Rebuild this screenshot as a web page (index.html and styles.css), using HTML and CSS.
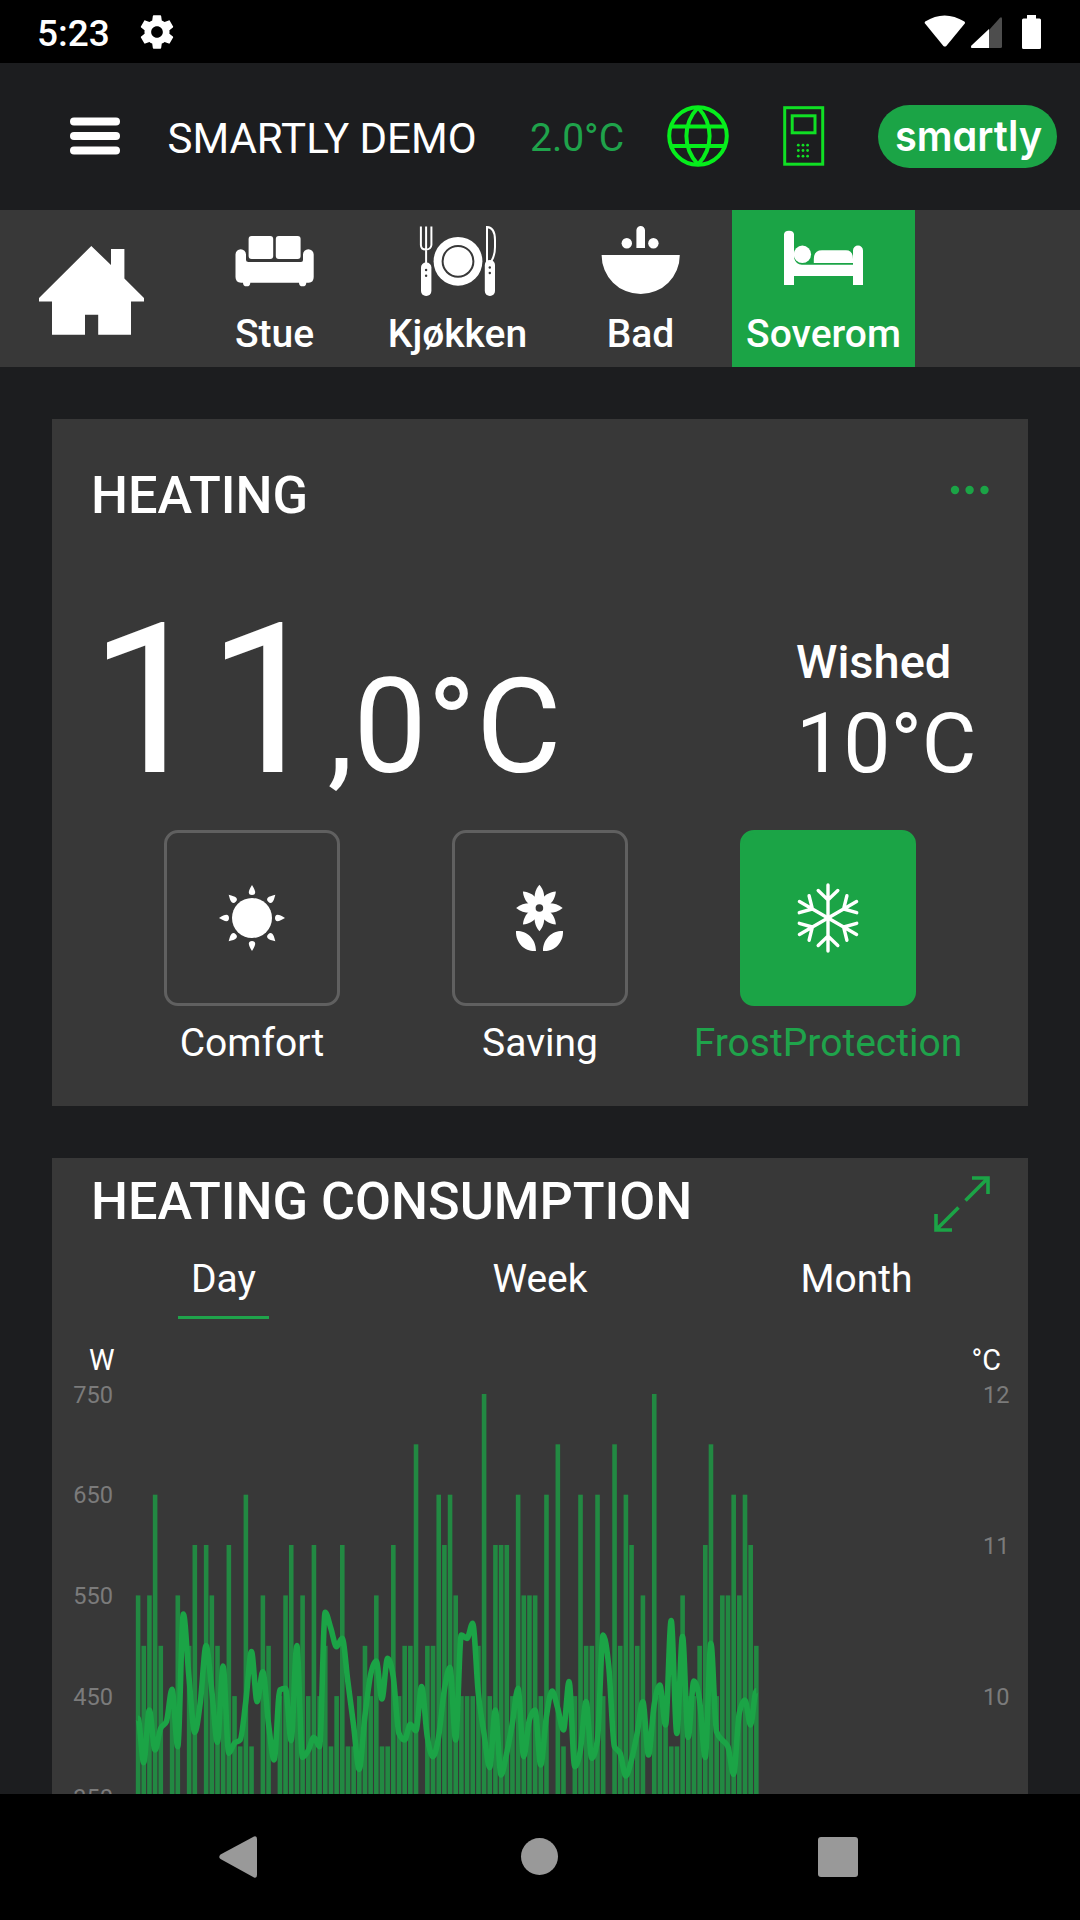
FILE: index.html
```html
<!DOCTYPE html>
<html lang="en">
<head>
<meta charset="utf-8">
<title>Smartly Demo</title>
<link rel="stylesheet" href="styles.css">
</head>
<body>
<div class="screen">
  <div class="status">
    <span class="clock">5:23</span>
    <svg class="gear" viewBox="0 0 24 24"><path d="M19.43 12.98c.04-.32.07-.64.07-.98s-.03-.66-.07-.98l2.11-1.65c.19-.15.24-.42.12-.64l-2-3.46c-.12-.22-.39-.3-.61-.22l-2.49 1c-.52-.4-1.08-.73-1.69-.98l-.38-2.65C14.46 2.18 14.25 2 14 2h-4c-.25 0-.46.18-.49.42l-.38 2.65c-.61.25-1.17.59-1.69.98l-2.49-1c-.23-.09-.49 0-.61.22l-2 3.46c-.13.22-.07.49.12.64l2.11 1.65c-.04.32-.07.65-.07.98s.03.66.07.98l-2.11 1.65c-.19.15-.24.42-.12.64l2 3.46c.12.22.39.3.61.22l2.49-1c.52.4 1.08.73 1.69.98l.38 2.65c.03.24.24.42.49.42h4c.25 0 .46-.18.49-.42l.38-2.65c.61-.25 1.17-.59 1.69-.98l2.49 1c.23.09.49 0 .61-.22l2-3.46c.12-.22.07-.49-.12-.64l-2.11-1.65zM12 15.5c-1.93 0-3.5-1.57-3.5-3.5s1.57-3.5 3.5-3.5 3.5 1.57 3.5 3.5-1.57 3.5-3.5 3.5z"/></svg>
    <svg class="signals" viewBox="924 14 118 34">
      <path d="M925.2 20.6Q944.5 8.5 964.4 20.6Q965.4 21.6 964.8 22.6L946.3 45Q944.8 46.2 943.4 45L925 22.6Q924.3 21.6 925.2 20.6Z"/>
      <path class="dim" d="M989 29L1000 16.8Q1002 15.5 1002 18V45.5Q1002 47 1000.5 47H989Z"/>
      <path d="M989 28V47H972Q970 46.5 971.5 44.5Z"/>
      <path d="M1027 14h9v3.6h3.5q1.5 0 1.5 1.5v27.400q0 1.500-1.500 1.500h-16q-1.500 0-1.500-1.500v-27.400q0-1.500 1.500-1.500h3.500z"/>
    </svg>
  </div>

  <header class="header">
    <svg class="burger" viewBox="0 0 50 38"><rect y="0.500" width="50" height="8" rx="4"/><rect y="15" width="50" height="8" rx="4"/><rect y="29.500" width="50" height="8" rx="4"/></svg>
    <h1 class="title">SMARTLY DEMO</h1>
    <span class="outdoor">2.0°C</span>
    <svg class="globe" viewBox="0 0 62 62"><circle cx="31" cy="31" r="28.800"/><path d="M4 21.500H58M4 41H58M31 2.500C15.500 19 15.500 43 31 59.500M31 2.500C46.500 19 46.500 43 31 59.500"/></svg>
    <svg class="panel" viewBox="0 0 42 60"><rect x="1.700" y="1.700" width="38" height="56.500"/><rect x="9.200" y="9.800" width="22.800" height="17"/><g class="keys"><circle cx="15.300" cy="39.200" r="1.400"/><circle cx="20" cy="39.200" r="1.400"/><circle cx="24.600" cy="39.200" r="1.400"/><circle cx="15.300" cy="44.500" r="1.400"/><circle cx="20" cy="44.500" r="1.400"/><circle cx="24.600" cy="44.500" r="1.400"/><circle cx="15.300" cy="50.200" r="1.400"/><circle cx="20" cy="50.200" r="1.400"/><circle cx="24.600" cy="50.200" r="1.400"/></g></svg>
    <svg class="logo" viewBox="0 0 180 63"><rect width="179" height="63" rx="31.500"/><text x="17" y="45.600" textLength="147" lengthAdjust="spacingAndGlyphs">smartly</text></svg>
  </header>

  <nav class="rooms">
    <a class="room"><svg class="home" viewBox="0 210 183 157"><path d="M39 298L91.300 246L111 265V249H124.400V278.400L144 298V301.400H131V334.700H98.200V314.700H85V334.700H52V301.400H39Z"/></svg></a>
    <a class="room">
      <svg viewBox="230 220 90 90"><rect x="248.600" y="236" width="24.600" height="23" rx="3"/><rect x="275.800" y="236" width="24.800" height="23" rx="3"/><path d="M235.500 254.500a5.200 5.200 0 0 1 10.500 0V260q0 2 2.500 2H301q2 0 2-2v-5.500a5.300 5.300 0 0 1 10.700 0V277q0 5.700-5 5.700H306.300a3.600 3.600 0 0 1-7.300 0H250.300a3.600 3.600 0 0 1-7.300 0H241q-5.500 0-5.500-5.700Z"/></svg>
      <span>Stue</span>
    </a>
    <a class="room">
      <svg viewBox="413 220 90 90">
        <path class="line" d="M420.900 226.500V245q0 4.500 5 4.500t5.500-4.500V226.500M426.100 226.500V265"/>
        <rect x="421" y="262.500" width="10.400" height="33.500" rx="5"/>
        <circle cx="458" cy="261.300" r="24.400"/><circle class="hole-line" cx="458" cy="261.300" r="15.400"/>
        <path class="line" d="M487 262V227Q495 227.500 495 240V247Q495 255 491.500 261"/>
        <rect x="484.800" y="260" width="10.200" height="36" rx="5"/>
        <g class="hole"><circle cx="426.100" cy="270" r="1.200"/><circle cx="426.100" cy="275.700" r="1.200"/><circle cx="489.800" cy="267.500" r="1.200"/><circle cx="489.800" cy="273" r="1.200"/></g>
      </svg>
      <span>Kjøkken</span>
    </a>
    <a class="room">
      <svg viewBox="596 220 90 90"><path d="M601.600 255H679.800A39.100 39.100 0 0 1 601.600 255ZM636.400 248V230.300a4.300 4.300 0 0 1 8.600 0V248Z"/><circle cx="626.800" cy="243.300" r="5.200"/><circle cx="653.400" cy="243.300" r="5.200"/></svg>
      <span>Bad</span>
    </a>
    <a class="room active">
      <svg viewBox="779 220 90 90"><path d="M784 285V234.500q0-3.800 5-3.800t5 3.800V258q2 6.700 8 6.700H853V250.500a5 5 0 0 1 10 0V285H853V276H794V285ZM813.800 263V259q0-8.700 8.200-8.700H846q7 0 7 8.700v4Z"/><circle cx="802.400" cy="254.300" r="8.700"/></svg>
      <span>Soverom</span>
    </a>
  </nav>

  <main class="content">
    <section class="card heating">
      <div class="card-head">
        <h2>HEATING</h2>
        <svg class="more" viewBox="0 0 40 10"><circle cx="5" cy="5" r="4.200"/><circle cx="19.600" cy="5" r="4.200"/><circle cx="34.500" cy="5" r="4.200"/></svg>
      </div>
      <div class="reading">
        <div class="current"><span class="whole">11</span><span class="fraction">,0°C</span></div>
        <div class="wished"><span class="wished-label">Wished</span><span class="wished-value">10°C</span></div>
      </div>
      <div class="modes">
        <div class="mode">
          <div class="tile"><svg viewBox="-35 -35 70 70"><defs><path id="ray" d="M0-33C2-29.500 3.200-27.500 3.200-25.500Q3-23 0-23T-3.200-25.500C-3.200-27.500-2-29.500 0-33Z"/></defs><circle r="20"/><use href="#ray"/><use href="#ray" transform="rotate(45)"/><use href="#ray" transform="rotate(90)"/><use href="#ray" transform="rotate(135)"/><use href="#ray" transform="rotate(180)"/><use href="#ray" transform="rotate(225)"/><use href="#ray" transform="rotate(270)"/><use href="#ray" transform="rotate(315)"/></svg></div>
          <span>Comfort</span>
        </div>
        <div class="mode">
          <div class="tile"><svg viewBox="-35 -35 70 70"><defs><path id="petal" d="M0-23.300C4-18.500 5-14 4.800-9L0 0L-4.800-9C-5-14-4-18.500 0-23.300Z"/></defs><g transform="translate(-.6 -10)"><use href="#petal"/><use href="#petal" transform="rotate(45)"/><use href="#petal" transform="rotate(90)"/><use href="#petal" transform="rotate(135)"/><use href="#petal" transform="rotate(180)"/><use href="#petal" transform="rotate(225)"/><use href="#petal" transform="rotate(270)"/><use href="#petal" transform="rotate(315)"/><circle r="9"/><circle class="hole" r="3.800"/></g><path d="M-24 13C-14 12.500-4 20-4 33C-14 34-24.500 26-24 13ZM23 13C13 12.500 3 20 3 33C13 34 23.500 26 23 13Z"/></svg></div>
          <span>Saving</span>
        </div>
        <div class="mode selected">
          <div class="tile"><svg class="flake" viewBox="-35 -35 70 70"><defs><path id="arm" d="M0 0V-33M-9.800-27.500L0-18L9.800-27.500"/></defs><use href="#arm"/><use href="#arm" transform="rotate(60)"/><use href="#arm" transform="rotate(120)"/><use href="#arm" transform="rotate(180)"/><use href="#arm" transform="rotate(240)"/><use href="#arm" transform="rotate(300)"/></svg></div>
          <span>FrostProtection</span>
        </div>
      </div>
    </section>

    <section class="card consumption">
      <div class="card-head">
        <h2>HEATING CONSUMPTION</h2>
        <svg class="expand" viewBox="0 0 56 56"><path d="M31.500 24.500L54 2M38 2H54V18M24.500 31.500L2 54M2 38V54H18"/></svg>
      </div>
      <div class="periods">
        <a class="period current-period">Day</a>
        <a class="period">Week</a>
        <a class="period">Month</a>
      </div>
      <div class="units"><span>W</span><span>°C</span></div>
      <svg class="chart" viewBox="0 0 976 414">
        <g class="ticks left">
          <text x="61" y="23">750</text><text x="61" y="123">650</text><text x="61" y="223.700">550</text><text x="61" y="324.500">450</text><text x="61" y="426">350</text>
        </g>
        <g class="ticks right">
          <text x="957.500" y="23">12</text><text x="957.500" y="174">11</text><text x="957.500" y="325">10</text>
        </g>
        <g class="bars"></g>
        <path class="trend"/>
      </svg>
    </section>
  </main>

  <div class="navbar">
    <svg viewBox="0 0 1080 126"><path d="M220.500 60.500L254 42.500Q257 41.500 257 45V81Q257 84.500 254 83.500L220.500 65Q218 63 220.500 60.500Z"/><circle cx="539.500" cy="62.500" r="18.500"/><rect x="818" y="43" width="40" height="40" rx="3"/></svg>
  </div>
</div>
<script src="chart.js"></script>
</body>
</html>
```
FILE: styles.css
```css
* { box-sizing: border-box; margin: 0; padding: 0; }
body { background: #000; color: #fff; font-family: Roboto, "Liberation Sans", sans-serif; }
svg { display: block; fill: #fff; flex: none; }
.screen { width: 1080px; height: 1920px; display: flex; flex-direction: column; overflow: hidden; background: #1c1d1f; }

.status { height: 63px; flex: none; background: #000; display: flex; align-items: center; padding: 0 38px 0 37px; }
.clock { width: 100px; font-size: 37px; font-weight: 500; line-height: 40px; padding-top: 4px; }
.gear { width: 40px; height: 40px; }
.signals { width: 118px; height: 34px; margin-left: auto; }
.dim { fill: #4d4d4d; }

.header { height: 147px; flex: none; display: grid; grid-template-columns: 98px 362.500px 137px 116px 95px 180px; align-items: center; padding: 0 0 1px 69.500px; }
.burger { width: 50px; height: 38px; }
.title { font-size: 42px; font-weight: 400; line-height: 50px; padding-top: 5px; white-space: nowrap; }
.outdoor { font-size: 39px; line-height: 50px; padding-top: 4px; color: #1fa34b; }
.globe { width: 62px; height: 62px; fill: none; stroke: #06ee1c; stroke-width: 4; }
.panel { width: 42px; height: 60px; fill: none; stroke: #10e024; stroke-width: 3; }
.keys { fill: #10e024; stroke: none; }
.logo { width: 180px; height: 63px; fill: #1ba446; }
.logo text { fill: #fff; font-family: Inter, sans-serif; font-size: 42.500px; font-weight: 600; font-feature-settings: "cv11"; }

.rooms { height: 157px; flex: none; display: grid; grid-template-columns: repeat(5, 183px); background: #383838; }
.room { display: flex; flex-direction: column; align-items: center; padding-top: 10px; font-size: 39px; font-weight: 500; line-height: 48px; }
.room svg { width: 90px; height: 90px; }
.room svg.home { width: 183px; height: 157px; margin-top: -10px; }
.room.active { background: #1ba446; }
.line { fill: none; stroke: #fff; stroke-width: 2; }
.hole-line { fill: none; stroke: #383838; stroke-width: 2; }
.hole { fill: #383838; }

.content { flex: 1; min-height: 0; overflow: hidden; padding: 52px 52px 0; display: flex; flex-direction: column; gap: 52px; }
.card { flex: none; background: #383838; }
.card-head { display: flex; align-items: center; justify-content: space-between; padding: 0 39px; }
.card-head h2 { font-size: 52.200px; font-weight: 500; line-height: 60px; }

.heating { height: 687px; }
.heating .card-head { height: 154px; }
.more { width: 40px; height: 10px; margin: 0 -1px 12px 0; fill: #1ba446; }
.reading { display: flex; justify-content: space-between; height: 257px; padding: 22px 0 0 37.400px; }
.current { line-height: 210px; white-space: nowrap; }
.whole { font-size: 210px; margin-right: 2px; }
.fraction { font-size: 131.250px; }
.wished { width: 232px; padding-top: 38.600px; display: flex; flex-direction: column; gap: 12.500px; }
.wished-label { font-size: 47px; font-weight: 500; line-height: 56px; }
.wished-value { font-size: 84px; line-height: 84px; }
.modes { display: grid; grid-template-columns: repeat(3, 288px); justify-content: center; }
.mode { display: flex; flex-direction: column; align-items: center; gap: 12.500px; font-size: 39px; line-height: 48px; }
.tile { width: 176px; height: 176px; border: 3px solid #606060; border-radius: 14px; display: flex; align-items: center; justify-content: center; }
.tile svg { width: 70px; height: 70px; }
.flake { fill: none; stroke: #fff; stroke-width: 3.400; stroke-linecap: round; }
.selected { color: #1fa34b; }
.selected .tile { background: #1ba446; border-color: #1ba446; }

.consumption { height: 700px; }
.consumption .card-head { height: 88px; }
.expand { width: 56px; height: 56px; fill: none; stroke: #1ba446; stroke-width: 3.600; margin: 3px -1px 0 0; }
.periods { display: grid; grid-template-columns: repeat(3, 316.500px); justify-content: center; justify-items: center; margin-top: 10px; font-size: 39px; line-height: 46px; }
.period { padding: 0 13px 14px; border-bottom: 3px solid transparent; }
.current-period { border-color: #1fa34b; }
.units { display: flex; justify-content: space-between; height: 40px; margin-top: 21px; padding: 0 27px 0 37px; font-size: 28.800px; line-height: 40px; }
.chart { width: 976px; height: 414px; }
.ticks { fill: #7b7b7b; font-size: 23.600px; text-anchor: end; }
.bars { fill: #1ba446; opacity: .75; }
.trend { fill: none; stroke: #1ba446; stroke-width: 5.600; stroke-linecap: butt; stroke-linejoin: round; }

.navbar { height: 126px; flex: none; background: #000; }
.navbar svg { width: 1080px; height: 126px; fill: #999; }
```
FILE: chart.js
```js
// Power in watts per interval; 0 marks an interval without a visible bar.
const power = [
  550, 500, 550, 650, 500, 0, 450, 550, 0, 500, 600, 0, 600, 550, 500, 450, 600, 450, 400, 650,
  400, 0, 550, 500, 0, 450, 550, 600, 450, 550, 450, 600, 450, 500, 400, 450, 600, 400, 400, 450,
  500, 450, 550, 400, 400, 600, 450, 500, 500, 700, 0, 500, 500, 650, 600, 650, 550, 450, 450, 450,
  500, 750, 450, 600, 600, 600, 450, 650, 550, 550, 550, 450, 650, 0, 700, 400, 0, 450, 650, 500,
  500, 650, 450, 0, 700, 500, 650, 600, 500, 550, 0, 750, 450, 450, 400, 400, 550, 450, 450, 500,
  600, 700, 450, 550, 550, 650, 550, 650, 600, 500
];

// Temperature trend, as heights in thirds of a pixel from the chart's top.
const trend = [
  1015, 1148, 990, 1110, 1045, 1025, 928, 1100, 702, 895, 1057, 965, 797, 930, 1087, 858, 1120, 1090, 1080, 965,
  815, 965, 875, 1030, 1140, 930, 925, 1082, 797, 1132, 1112, 1072, 1100, 697, 745, 800, 775, 905, 1035, 1168,
  1010, 885, 843, 957, 835, 890, 1060, 1080, 1033, 1052, 920, 1070, 1130, 1070, 930, 862, 1080, 765, 775, 730,
  940, 1060, 1163, 990, 1185, 1120, 1030, 925, 1130, 1020, 990, 1155, 1010, 933, 985, 1050, 905, 1160, 1110, 965,
  1135, 1080, 765, 860, 1100, 1120, 1188, 1140, 1060, 965, 1125, 975, 915, 1035, 722, 1060, 770, 1072, 903, 960,
  1132, 790, 1055, 1080, 1100, 1183, 1000, 960, 1035, 932
];

const STEP = 5.672;
const barGroup = document.querySelector('.bars');
power.forEach((watts, i) => {
  if (!watts) return;
  const y = 14 + (750 - watts) * 1.007;
  const bar = document.createElementNS('http://www.w3.org/2000/svg', 'rect');
  bar.setAttribute('x', (83.8 + i * STEP).toFixed(2));
  bar.setAttribute('y', y.toFixed(1));
  bar.setAttribute('width', 4.6);
  bar.setAttribute('height', (440 - y).toFixed(1));
  barGroup.appendChild(bar);
});

// Monotone cubic interpolation through the trend points.
const ys = trend.map(v => v / 3);
const slope = i => {
  if (i === 0 || i === ys.length - 1) return 0;
  const a = (ys[i] - ys[i - 1]) / STEP, b = (ys[i + 1] - ys[i]) / STEP;
  if (a * b <= 0) return 0;
  return Math.sign(a) * Math.min(Math.abs(a), Math.abs(b), Math.abs(a + b) / 4) * 2;
};
let d = `M86 ${ys[0]}`;
for (let i = 1; i < ys.length; i++) {
  const x0 = 86 + (i - 1) * STEP, x1 = 86 + i * STEP, t = STEP / 3;
  d += `C${x0 + t} ${ys[i - 1] + slope(i - 1) * t} ${x1 - t} ${ys[i] - slope(i) * t} ${x1} ${ys[i]}`;
}
document.querySelector('.trend').setAttribute('d', d);
```
